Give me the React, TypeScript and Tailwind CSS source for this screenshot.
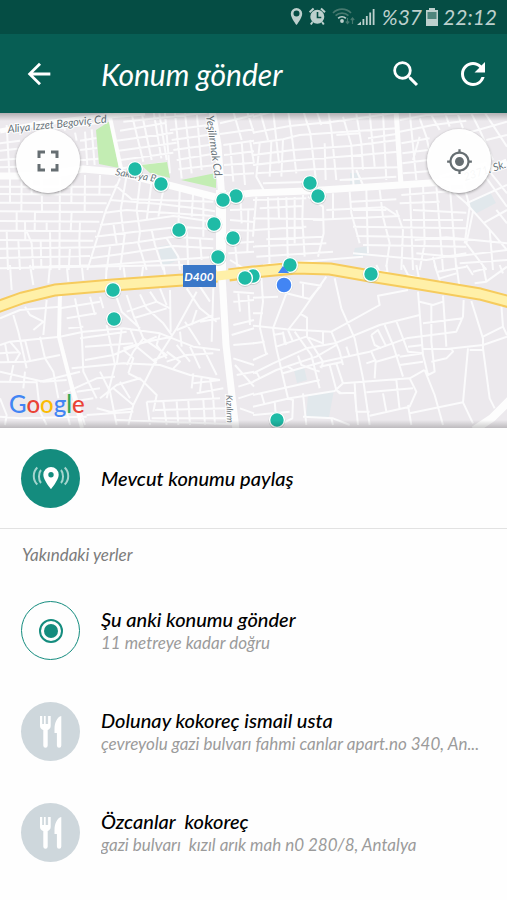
import { MdArrowBack, MdFullscreen, MdMyLocation, MdRefresh, MdSearch } from "react-icons/md";

const places = [
  {
    name: "Dolunay kokoreç ismail usta",
    address: "çevreyolu gazi bulvarı fahmi canlar apart.no 340, An...",
  },
  {
    name: "Özcanlar  kokoreç",
    address: "gazi bulvarı  kızıl arık mah n0 280/8, Antalya",
  },
];

const markers = [
  [135, 169], [161, 184], [236, 196], [223, 200], [179, 230], [214, 224], [233, 238],
  [218, 257], [310, 183], [318, 196], [253, 276], [245, 278], [290, 265], [371, 274],
  [113, 290], [114, 319], [277, 420],
];

// Side streets, one entry per map tile. Each tile is drawn at 3x.
const tiles = [
  {
    at: "translate(0 110) scale(.33333)",
    streets: `M0 100L60 92M240 92L290 84M0 122L52 116M240 120L292 114M0 150L50 146M240 150L296 146
      M0 172L60 170M20 45L28 190M255 65L262 165M275 58L284 165M225 68L230 92M190 48L196 62M130 60L160 56L290 40
      M370 35L620 8M360 62L500 38M350 92L520 68M356 122L530 98M362 150L520 128M365 175L500 158
      M395 12L430 155M425 8L455 150M460 0L484 145M494 0L510 190M478 10L500 150M525 10L545 205M555 10L575 190M590 5L605 180
      M510 60L620 46M515 90L628 74M520 120L632 104M530 150L636 132M535 178L640 166
      M660 40L762 15M660 72L762 58M670 105L762 92M672 135L762 124M672 165L762 158M670 195L762 190
      M700 5L725 90M740 0L762 70M690 100L700 215M725 95L735 225M750 90L762 160
      M0 230L345 230M0 252L332 254M0 278L320 280M0 304L310 306M0 333L298 335M0 362L288 364M0 390L280 392M0 416L275 412M0 444L270 438M95 470L268 466
      M30 205L30 278M65 200L64 304M95 204L95 252M125 204L126 304M180 205L178 480M215 200L214 280M255 195L254 306M300 195L298 254
      M50 304L50 365M75 333L76 392M105 304L104 362M140 333L140 364M215 304L212 364M240 335L238 392
      M20 364L24 480M55 392L60 480M80 364L95 400L100 480M122 390L124 470M150 364L152 480M210 412L206 480M238 392L240 466
      M360 205L318 300L262 480M345 225L395 268L640 275M330 270L480 282L600 296L645 304M315 308L380 300L640 318
      M300 345L420 332L520 318L640 335M285 380L400 366L540 350L640 358M275 412L400 398L520 380L640 388M270 445L380 430L520 408L640 415M262 470L400 458L650 440
      M380 195L362 300L370 365M420 215L410 300L420 365M455 215L440 330M490 238L475 320M540 225L535 350M580 240L575 320M610 250L610 380
      M340 340L350 400M375 366L360 480M420 366L415 400L440 480M455 360L465 405L490 480M500 385L535 440L540 480M560 350L565 480M600 388L605 450M330 410L320 480
      M690 300L762 298M690 330L762 336M690 360L762 362M690 400L762 395M685 430L762 425M690 450L740 480M720 240L725 340M745 300L742 430M705 400L712 470`,
  },
  {
    at: "translate(253 110) scale(.33333)",
    streets: `M0 20L60 5M0 68L110 48L240 35L430 8M0 100L90 88L140 75L430 55M0 135L120 120L290 108L435 90M0 165L110 152L290 138L435 125M10 190L180 178L435 172M30 220L180 215
      M20 0L45 90M60 0L78 160M105 0L118 90L130 190M150 0L172 70L190 220M190 0L205 45M225 0L235 60L250 210M270 20L295 105L302 235M310 12L325 100L330 180M350 10L365 170M390 8L400 210
      M20 100L10 200L35 245M55 95L50 200M90 90L85 200M215 100L218 210M250 75L320 70M345 85L430 72M260 210L430 200M310 180L330 225
      M440 30L520 15L762 5M440 65L540 45L640 32M445 100L530 85M448 130L525 120M448 160L525 150M450 190L540 182M470 5L490 210M500 25L520 80L530 125M535 15L560 60M575 5L590 50M610 0L630 55M650 0L680 60L720 150M690 0L762 110M640 70L762 35M700 90L762 75
      M500 80L480 150M560 200L700 160M710 185L762 250
      M0 270L160 265M20 295L150 288M0 325L210 328M0 360L160 350M40 388L210 380M0 410L220 400M10 440L240 425M30 465L330 440
      M10 260L0 380M45 262L50 480M75 262L78 325M100 262L105 470M125 262L125 400M150 255L148 330L155 440M165 260L210 290L212 370L195 440M240 250L240 330M290 245L295 310L320 400M340 240L345 430
      M180 330L440 318M295 275L430 268M220 300L395 292L430 315M300 300L400 300M300 350L640 355M310 378L440 380L650 390M330 405L640 410M300 430L520 450L640 430M380 240L390 320L410 400L400 470M430 300L450 360L445 480
      M445 255L640 240M440 280L560 275M470 220L480 480M510 220L515 400L500 480M550 225L560 350L570 480M590 222L600 350L610 480M630 215L650 290L635 400M480 300L640 308M450 330L630 330M485 390L580 382L762 400M490 430L600 440L762 420
      M600 245L640 280L720 370L762 420M640 280L762 225M690 340L762 300M690 190L762 290M660 305L640 400L700 480M710 360L720 480M730 300L762 340M620 460L762 450M540 440L550 480`,
  },
  {
    at: "translate(0 265) scale(.33333)",
    streets: `M0 10L550 0M30 0L35 75M90 0L100 60M150 0L145 55M200 0L205 50M245 0L250 45M320 0L318 42M370 0L375 38M430 0L425 35M490 0L495 30
      M0 160L60 135L180 125M40 150L55 200L80 310M75 125L90 150L130 170L100 195M140 105L130 210M30 230L180 215L250 200L370 190L480 205L580 245L660 255
      M0 240L30 230L60 265L45 290M0 265L55 262M15 235L25 290M0 292L80 290L180 270M75 225L90 285M120 215L135 280L160 320L175 400
      M180 100L178 215L205 320L255 480M180 130L300 110M200 160L290 145M205 190L250 185M225 100L245 200L250 320L290 400M270 95L285 150M300 95L310 130M240 220L380 200M255 245L400 235M255 285L340 270L470 215M320 180L345 300L320 400M365 190L350 300
      M215 310L370 295L480 300L570 330L660 345M120 350L240 320M0 320L130 350L200 345M0 350L110 352L120 440M75 320L70 370M40 300L30 350M190 385L290 340L345 335
      M350 98L365 140L420 190M380 90L400 150L430 220M420 88L440 130L490 175L515 210M450 80L470 110L510 130M510 75L512 200M380 140L470 110M400 160L500 130M480 70L500 120
      M590 80L530 190L460 300L400 420L385 480M560 70L600 130L650 170M600 65L630 110M640 70L635 230M530 195L640 150M555 170L600 240M540 200L545 245M590 135L575 180M600 170L660 160
      M430 220L400 260L380 300M430 220L500 270L460 285M410 245L470 295M370 250L440 230L515 215M390 190L410 240M480 205L470 240L500 280M370 255L400 280L385 325
      M500 260L540 290L520 310M500 290L560 270L640 265M570 245L600 310M610 250L650 330M530 240L570 290M580 325L575 370M605 335L600 380M630 340L640 400M580 355L660 345M590 385L670 370
      M300 400L350 360L420 340L470 390L460 440M340 370L400 420M360 350L390 400M290 430L330 440L400 430M230 380L300 370M215 410L280 400M260 450L400 440M300 320L330 380L350 480M385 325L425 345
      M440 410L450 480M440 410L660 400M465 435L680 430M490 410L500 480M530 410L535 480M565 408L570 480M610 405L615 480M640 405L645 480M455 460L680 460
      M700 80L762 85M700 110L762 105M715 85L720 140M745 90L750 180M700 180L762 165M695 210L762 190M700 240L762 235M700 280L762 300M705 300L762 365M710 330L762 320M715 365L762 350M715 400L762 385M720 430L762 445M0 455L60 460L260 455M0 400L20 450L15 480M120 440L140 480M200 440L210 480M350 465L700 478`,
  },
  {
    at: "translate(253 265) scale(.33333)",
    streets: `M25 38L30 110L20 185L40 270M0 98L75 95M100 85L60 190L70 250L105 400M100 85L170 102L205 60M150 55L150 95M140 52L205 62M220 35L140 150L105 195L120 230M140 145L162 158V215L210 290L205 310
      M245 40L265 130L305 220L330 340L350 480M0 182L100 193L235 200L290 170L380 120L375 92L465 75M0 145L30 145M60 210L90 205L100 240M70 245L160 215L210 235V200
      M0 325L60 295L160 250L245 235L380 180L500 150M0 350L70 315L190 275L250 240M0 235L35 230M0 285L45 265M10 320L20 340M90 325L210 290L350 260L460 220M235 200L260 260L270 300M90 200L95 235M125 200L175 270L200 370
      M135 272L145 300L200 320M200 305L270 290M230 300L250 375L265 385M250 295L270 355M105 305L120 315M280 245L290 275M355 260L368 290L365 340M370 290L440 270M355 210L365 240L385 250M355 210L375 195L400 245M395 180L420 240L450 335M430 168L465 260L510 265M340 295L370 285
      M0 390L90 370L200 345M0 425L110 400L245 378L270 355L470 340L515 315M105 400L120 405L118 460L80 480M25 385L35 420M65 410L68 445M150 385L160 480M150 455L240 460L290 480M0 450L110 440M235 460L240 480
      M250 375L260 385L305 383L315 480M305 355L310 440H350M340 382L480 370M350 452L470 425L490 380L470 340M390 385L400 440M430 345L440 435M465 420L475 480M470 445L630 412L660 475M515 315L545 390L570 480
      M495 80L510 270L525 330L545 320L535 230V120M500 110L540 120L570 110M570 92L580 245M460 220L610 200L630 155L632 105M510 175L630 160M465 245L510 240M510 252H580L690 240L762 215M440 275L510 265M440 300L510 290M535 290L580 280L600 260L595 250
      M655 108L690 220V255H650M645 250L630 412M690 250L710 400L725 430M745 120L750 185L762 210M690 215L750 185M370 0L380 20H400M400 0L405 30M450 0L465 30L520 45M490 0L500 50M545 0L565 60M555 20L640 5M560 40L610 25M610 0L620 70M640 0L660 30M660 20L700 10M665 55L700 50L762 5M690 0L700 50M740 0L750 25`,
  },
];

const majorRoads = "M0 176L40 176L83 169L117 172L180 188L215 197L253 193L306 191L400 185L460 181L487 171L507 162";

function CityMap() {
  return (
    <svg
      viewBox="0 113 507 315"
      preserveAspectRatio="xMidYMid slice"
      className="block h-full w-full"
      role="img"
      aria-label="Harita"
    >
      <rect y="100" width="507" height="340" fill="#ece9ed" />
      <g fill="#e1e8ec">
        <path d="M158 247L172 244L178 260L163 267ZM350 173H360V184H350ZM468 203L490 192L496 203L475 214ZM355 248L369 246V256H353ZM294 370L304 367L307 380L297 383ZM308 396L334 390L329 417H306Z" />
      </g>
      {tiles.map((tile) => (
        <path key={tile.at} d={tile.streets} transform={tile.at} fill="none" stroke="#fbfbfc" strokeWidth="6" strokeLinejoin="round" />
      ))}
      <g fill="#c3edb3">
        <path d="M96 130L110 121L119 168L99 164Z" />
        <path d="M141 165L167 162L170 178L150 173Z" />
        <path d="M181 180L216 173V188Z" />
      </g>
      <g fill="none" stroke="#fdfdfd" strokeLinejoin="round">
        <path d={majorRoads} strokeWidth="7" />
        <path d="M0 131L43 123L97 117L145 113" strokeWidth="5" />
        <path d="M109 113L122 173" strokeWidth="4" />
        <path d="M212 110L218 145L222 200V275L226 345L236 430" strokeWidth="7" />
        <path d="M221 190V275" strokeWidth="10" />
        <path d="M396 110L401 185" strokeWidth="5" />
        <path d="M474 430L492 418L510 400" strokeWidth="8" />
        <path d="M60 293L59 337L68 372L82 428" strokeWidth="4" />
      </g>
      <g fill="none" strokeLinejoin="round">
        <path d="M-3 307L22 298L55 290L113 285L183 280L217 276M229 275L253 272L296 268L330 269L370 276L420 284L480 294L510 302" stroke="#f6cb5d" strokeWidth="13" />
        <path d="M-3 307L22 298L55 290L113 285L183 280L217 276L253 272L296 268L330 269L370 276L420 284L480 294L510 302" stroke="#fff0a8" strokeWidth="9" />
      </g>

      {/* Street names */}
      <g fill="#68737a" stroke="#ffffff" strokeWidth="2" paintOrder="stroke" fontFamily="Lato, sans-serif" fontStyle="italic" fontSize="11">
        <text transform="translate(8 133) rotate(-6)">Aliya Izzet Begoviç Cd</text>
        <text transform="translate(206 116) rotate(82)">Yeşilırmak Cd.</text>
        <text transform="translate(115 175) rotate(10)" fontSize="10">Sakarya B</text>
        <text transform="translate(465 181) rotate(-18)">2371. Sk.</text>
        <text transform="translate(226 395) rotate(88)" fontSize="9">Kızılırm</text>
      </g>

      <rect x="183" y="265" width="33" height="22" fill="#3a77c8" />
      <text x="199" y="281" textAnchor="middle" fill="#ffffff" fontFamily="Lato, sans-serif" fontStyle="italic" fontWeight="700" fontSize="12">
        D400
      </text>

      {markers.map(([x, y]) => (
        <g key={`${x}-${y}`}>
          <circle cx={x} cy={y + 0.5} r="8.4" fill="#8d9996" opacity="0.35" />
          <circle cx={x} cy={y} r="7.4" fill="#1fbba6" stroke="#ffffff" strokeWidth="1.4" />
        </g>
      ))}
      <path d="M283 266L289 273H278Z" fill="#4285f4" />
      <circle cx="284" cy="285" r="9" fill="#8d9996" opacity="0.4" />
      <circle cx="284" cy="285" r="8" fill="#4285f4" stroke="#ffffff" strokeWidth="1.5" />
    </svg>
  );
}

function StatusIcons() {
  return (
    <svg width="86" height="20" viewBox="0 0 86 20" fill="#bdd0cd" aria-hidden="true">
      {/* Location */}
      <path fillRule="evenodd" d="M6.500 1A5.700 5.700 0 0 0 .8 6.700C.8 11 6.500 18 6.500 18S12.200 11 12.200 6.700A5.700 5.700 0 0 0 6.500 1ZM6.500 3.600A3 3 0 1 1 6.500 9.600A3 3 0 0 1 6.500 3.600Z" />
      {/* Alarm */}
      <circle cx="27.300" cy="9.800" r="7" />
      <path d="M19.600 5.200L23.600 1.500M35 5.200L31 1.500M22.500 15L20.800 17.500M32.100 15L33.800 17.500" stroke="#bdd0cd" strokeWidth="2" />
      <path d="M27.500 5V10.500H31.300" fill="none" stroke="#054d44" strokeWidth="1.600" />
      {/* Wi-Fi */}
      <g fill="none" strokeWidth="1.700">
        <path d="M43 6A12.500 12.500 0 0 1 61 6M45.600 8.700A9 9 0 0 1 58.400 8.700" stroke="#47796f" />
        <path d="M48.200 11.400A5.200 5.200 0 0 1 55.800 11.400" stroke="#bdd0cd" />
      </g>
      <circle cx="52" cy="14" r="1.900" />
      <path d="M57.500 11V16M55.800 14.500L57.500 16.500L59.200 14.500M62.500 17V11.500M60.800 13L62.500 11L64.200 13" fill="none" stroke="#47796f" strokeWidth="1.200" />
      {/* Signal */}
      <path d="M67 18L71 14.500V18ZM72.500 12H74.300V18H72.500ZM75.900 9H77.700V18H75.900ZM79.300 5.500H81.100V18H79.300ZM82.700 2H84.500V18H82.700Z" />
    </svg>
  );
}

function LiveLocationIcon() {
  return (
    <svg width="38" height="28" viewBox="0 0 38 28" fill="#ffffff" aria-hidden="true">
      <path fillRule="evenodd" d="M19 3A7.700 7.700 0 0 0 11.300 10.700C11.300 16 19 25 19 25S26.700 16 26.700 10.700A7.700 7.700 0 0 0 19 3ZM19 8A2.700 2.700 0 1 1 19 13.400A2.700 2.700 0 0 1 19 8Z" />
      <g fill="none" stroke="#a5d5ce" strokeWidth="2">
        <path d="M9 6C6.300 9 6.300 16 9 19M5.300 3.500C.6 8 .6 16 5.300 20.500M29 6C31.700 9 31.700 16 29 19M32.700 3.500C37.400 8 37.400 16 32.700 20.500" />
      </g>
    </svg>
  );
}

function FoodIcon() {
  return (
    <svg width="24" height="34" viewBox="0 0 24 34" fill="#ffffff" aria-hidden="true">
      <path d="M1.500 1H3.400V9H4.800V1H6.700V9H8.100V1H10L11.700 1V11C11.700 13 10.200 14.500 8.700 15V30.500A2.200 2.200 0 0 1 4.300 30.500V15C2.500 14.500 1 13 1 11V1Z" />
      <path d="M4.100 1V9M8.600 1V9" stroke="#ced7dc" strokeWidth="1" />
      <path d="M22.300 1V30.500A2.200 2.200 0 0 1 17.900 30.500V18H15.500V14C15.500 8 18 2 22.300 1Z" />
    </svg>
  );
}

export default function App() {
  return (
    <div className="flex min-h-screen flex-col bg-[#fefefe] font-['Lato',sans-serif] italic text-black">
      {/* Status bar */}
      <div className="flex h-[34px] items-center justify-end bg-[#054d44] pr-[10px] text-[#bdd0cd]">
        <StatusIcons />
        <span className="ml-[6px] text-[21px] leading-6">%37</span>
        <svg width="12" height="18" viewBox="0 0 12 18" className="ml-1" aria-hidden="true">
          <path d="M3 0H9V2H12V18H0V2H3Z" fill="#bdd0cd" />
          <path d="M1.500 4H10.500V11H1.500Z" fill="#4f857c" />
        </svg>
        <span className="ml-[5px] text-[21px] leading-6">22:12</span>
      </div>

      {/* Toolbar */}
      <header className="flex h-[79px] items-center bg-[#075e54] pr-4 pl-[22px] text-white">
        <button type="button" aria-label="Geri" className="shrink-0">
          <MdArrowBack size={34} />
        </button>
        <h1 className="ml-[45px] flex-1 text-[30px] leading-9">Konum gönder</h1>
        <button type="button" aria-label="Ara" className="shrink-0">
          <MdSearch size={34} />
        </button>
        <button type="button" aria-label="Yenile" className="ml-8 shrink-0">
          <MdRefresh size={36} />
        </button>
      </header>

      {/* Map */}
      <section className="relative h-[315px] overflow-hidden">
        <CityMap />
        <div className="pointer-events-none absolute inset-x-0 top-0 h-2 bg-linear-to-b from-black/25 to-transparent" />
        <div className="pointer-events-none absolute inset-x-0 bottom-0 h-2 bg-linear-to-t from-black/20 to-transparent" />
        <button
          type="button"
          aria-label="Tam ekran"
          className="absolute top-4 left-4 flex size-16 items-center justify-center rounded-full bg-white/95 text-[#666e72] shadow-[0_1px_3px_rgba(0,0,0,0.4)]"
        >
          <MdFullscreen size={36} />
        </button>
        <button
          type="button"
          aria-label="Konumum"
          className="absolute top-4 right-4 flex size-16 items-center justify-center rounded-full bg-white/95 text-[#666e72] shadow-[0_1px_3px_rgba(0,0,0,0.4)]"
        >
          <MdMyLocation size={27} />
        </button>
        <div className="absolute bottom-2 left-[9px] text-2xl leading-8 font-medium not-italic">
          <span className="text-[#4285f4]">G</span>
          <span className="text-[#ea4335]">o</span>
          <span className="text-[#fbbc05]">o</span>
          <span className="text-[#4285f4]">g</span>
          <span className="text-[#34a853]">l</span>
          <span className="text-[#ea4335]">e</span>
        </div>
      </section>

      {/* Share actions and nearby places */}
      <main>
        <button type="button" className="flex h-[101px] w-full items-center border-b border-[#e2e2e2] px-[21px] text-left">
          <span className="flex size-[59px] shrink-0 items-center justify-center rounded-full bg-[#148c7e]">
            <LiveLocationIcon />
          </span>
          <span className="ml-[21px] text-xl leading-6 font-medium">Mevcut konumu paylaş</span>
        </button>

        <h2 className="px-[22px] pt-[14px] text-[17px] leading-6 text-[#7c7c7c]">Yakındaki yerler</h2>

        <ul className="mt-[13px]">
          <li>
            <button type="button" className="flex h-[101px] w-full items-center px-[21px] text-left">
              <span className="flex size-[59px] shrink-0 items-center justify-center rounded-full border border-[#148c7e]">
                <svg width="26" height="26" viewBox="0 0 26 26" aria-hidden="true">
                  <circle cx="13" cy="13" r="11" fill="none" stroke="#148c7e" strokeWidth="2" />
                  <circle cx="13" cy="13" r="7" fill="#148c7e" />
                </svg>
              </span>
              <span className="ml-[21px] min-w-0 flex-1">
                <span className="block truncate text-xl leading-6 font-medium">Şu anki konumu gönder</span>
                <span className="block truncate text-[17px] leading-6 text-[#9b9b9b]">11 metreye kadar doğru</span>
              </span>
            </button>
          </li>
          {places.map((place) => (
            <li key={place.name}>
              <button type="button" className="flex h-[101px] w-full items-center pr-3 pl-[21px] text-left">
                <span className="flex size-[59px] shrink-0 items-center justify-center rounded-full bg-[#ced7dc]">
                  <FoodIcon />
                </span>
                <span className="ml-[21px] min-w-0 flex-1">
                  <span className="block truncate text-xl leading-6 font-medium whitespace-pre">{place.name}</span>
                  <span className="block truncate text-[17px] leading-6 whitespace-pre text-[#9b9b9b]">{place.address}</span>
                </span>
              </button>
            </li>
          ))}
        </ul>
      </main>
    </div>
  );
}
